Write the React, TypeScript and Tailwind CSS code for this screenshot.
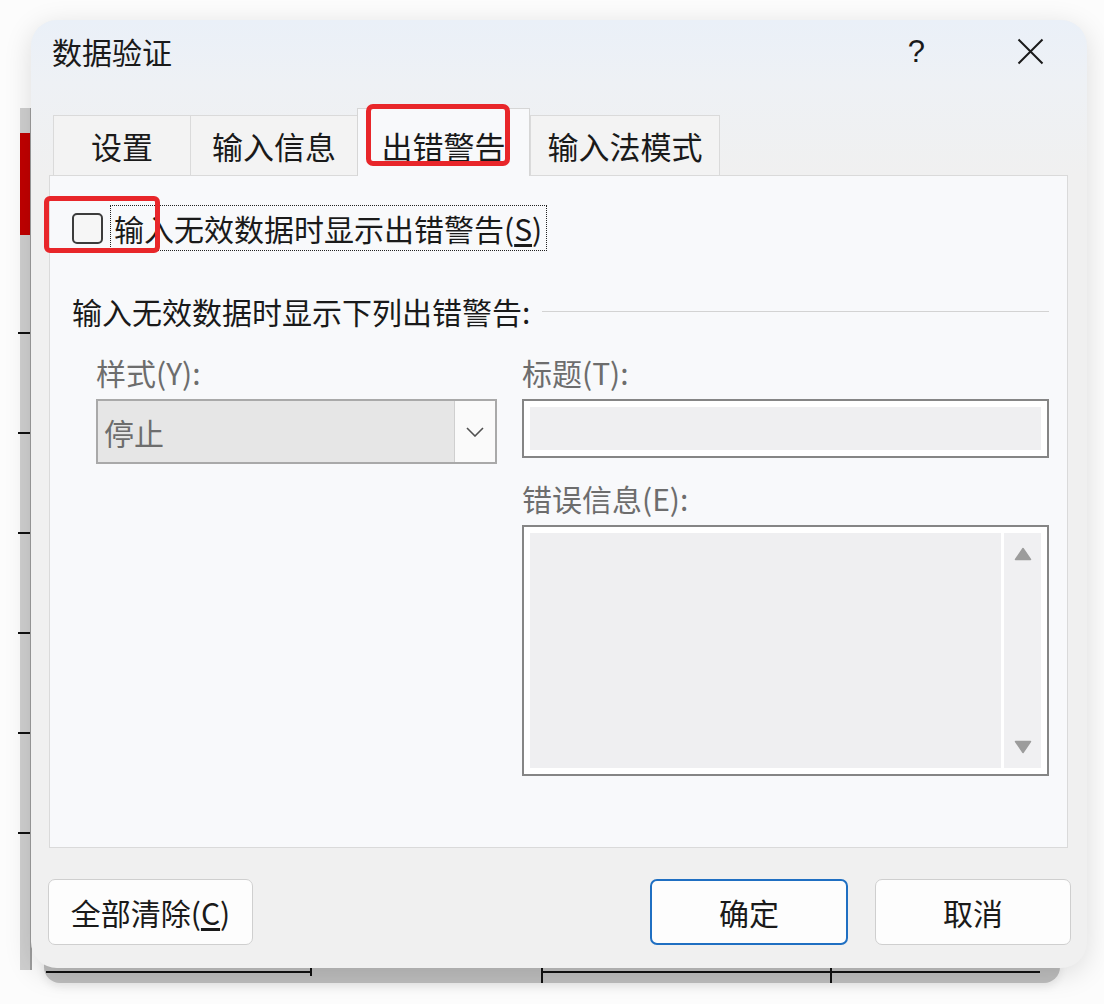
import React from "react";

const F = "font-['Noto_Sans_CJK_SC','Noto_Sans',sans-serif]";

function Tab({ label, w, selected }: { label: string; w: number; selected?: boolean }) {
  if (selected) {
    return (
      <div
        className="relative z-10 -mb-px flex h-[68px] shrink-0 items-end justify-center border border-b-0 border-[#d6d6d6] bg-[#f8f9fb] pb-[15px]"
        style={{ width: w }}
      >
        <span className="text-[31px] leading-[31px] text-[#1a1a1a]">{label}</span>
      </div>
    );
  }
  return (
    <div
      className="flex h-[60px] shrink-0 items-end justify-center border border-b-0 border-r-0 border-[#dadada] bg-[#f3f3f3] pb-[14px] last:border-r"
      style={{ width: w }}
    >
      <span className="text-[31px] leading-[31px] text-[#1a1a1a]">{label}</span>
    </div>
  );
}

export default function App() {
  return (
    <div className={`relative h-[1004px] w-[1104px] overflow-hidden bg-[#fcfcfc] ${F}`}>
      {/* spreadsheet peeking behind the dialog: left edge */}
      <div className="absolute left-[20px] top-[108px] h-[862px] w-[12px] border-r-2 border-[#9d9d9d] bg-[#cfcfcf]">
        <div className="absolute left-0 top-[25px] h-[102px] w-[10px] bg-[#c00000]" />
        <div className="absolute left-[-2px] top-[224px] h-[2px] w-[12px] bg-[#111]" />
        <div className="absolute left-[-2px] top-[324px] h-[2px] w-[12px] bg-[#111]" />
        <div className="absolute left-[-2px] top-[424px] h-[2px] w-[12px] bg-[#111]" />
        <div className="absolute left-[-2px] top-[524px] h-[2px] w-[12px] bg-[#111]" />
        <div className="absolute left-[-2px] top-[624px] h-[2px] w-[12px] bg-[#111]" />
        <div className="absolute left-[-2px] top-[724px] h-[2px] w-[12px] bg-[#111]" />
      </div>
      {/* spreadsheet peeking behind the dialog: bottom edge */}
      <div className="absolute left-[44px] top-[958px] h-[25px] w-[1016px] rounded-b-[16px] bg-[#bdbdbd] shadow-[0_4px_8px_rgba(0,0,0,0.08)]">
        <div className="absolute left-[2px] top-[13px] h-[2px] w-[266px] bg-[#111]" />
        <div className="absolute left-[266px] top-[10px] h-[8px] w-[2px] bg-[#111]" />
        <div className="absolute left-[498px] top-[13px] h-[2px] w-[498px] bg-[#111]" />
        <div className="absolute left-[497px] top-[10px] h-[15px] w-[2px] bg-[#111]" />
        <div className="absolute left-[786px] top-[10px] h-[15px] w-[2px] bg-[#111]" />
      </div>

      {/* dialog window */}
      <div className="absolute left-[31px] top-[20px] flex h-[948px] w-[1056px] flex-col overflow-hidden rounded-[26px] bg-[#f0f0f0] shadow-[0_6px_28px_rgba(0,0,0,0.13)]">
        {/* title bar */}
        <div className="flex h-[62px] shrink-0 items-center bg-linear-to-b from-[#eaf0f8] to-[#eef1f5] pl-[21px]">
          <span className="text-[30px] leading-[30px] text-[#1a1a1a]">数据验证</span>
          <span className="ml-auto mr-[92px] text-[31px] leading-[31px] text-[#1a1a1a] font-['Liberation_Sans',sans-serif]">?</span>
          <svg width="27" height="27" viewBox="0 0 27 27" className="mr-[43px]">
            <path d="M1.5 1.5 L25.5 25.5 M25.5 1.5 L1.5 25.5" stroke="#1a1a1a" strokeWidth="2" fill="none" />
          </svg>
        </div>

        {/* tabs */}
        <div className="flex h-[93px] shrink-0 items-end bg-linear-to-b from-[#eef1f5] to-[#f0f0f0] pl-[22px]">
          <Tab label="设置" w={137} />
          <Tab label="输入信息" w={167} />
          <Tab label="出错警告" w={173} selected />
          <Tab label="输入法模式" w={190} />
        </div>

        {/* panel */}
        <div className="ml-[18px] flex h-[673px] w-[1019px] shrink-0 flex-col border border-[#dadada] bg-[#f8f9fb]">
          {/* checkbox row */}
          <div className="mt-[29px] flex h-[46px] items-center pl-[22px]">
            <div className="h-[31px] w-[31px] rounded-[5px] border-2 border-[#3c3c3c] bg-[#f6f6f6]" />
            <div className="ml-[7px] flex h-[46px] items-center border border-dotted border-[#222] pl-[3px] pr-[4px]">
              <span className="text-[30px] leading-[30px] text-[#1a1a1a]">
                输入无效数据时显示出错警告(<span className="underline underline-offset-[3px]">S</span>)
              </span>
            </div>
          </div>

          {/* group header */}
          <div className="mt-[45px] flex items-center pl-[22px] pr-[18px]">
            <span className="text-[30px] leading-[30px] text-[#1a1a1a]">输入无效数据时显示下列出错警告:</span>
            <div className="ml-[12px] h-px flex-1 bg-[#d3d3d3]" />
          </div>

          {/* fields */}
          <div className="mt-[31px] flex gap-[25px] pl-[46px]">
            {/* left column */}
            <div className="flex w-[401px] flex-col">
              <span className="text-[30px] leading-[30px] text-[#6d6d6d]">样式(Y):</span>
              <div className="mt-[12px] flex h-[65px] border-2 border-[#a9a9a9] bg-[#e6e6e6]">
                <div className="flex flex-1 items-center pl-[6px]">
                  <span className="text-[30px] leading-[30px] text-[#6d6d6d]">停止</span>
                </div>
                <div className="flex w-[41px] items-center justify-center border-l border-[#cfcfcf] bg-[#fafafa]">
                  <svg width="18" height="10" viewBox="0 0 18 10">
                    <path d="M1 1 L9 9 L17 1" stroke="#505050" strokeWidth="1.6" fill="none" />
                  </svg>
                </div>
              </div>
            </div>

            {/* right column */}
            <div className="flex w-[527px] flex-col">
              <span className="text-[30px] leading-[30px] text-[#6d6d6d]">标题(T):</span>
              <div className="mt-[12px] h-[59px] border-2 border-[#858585] bg-white p-[6px]">
                <div className="h-full w-full bg-[#efeff1]" />
              </div>
              <span className="mt-[25px] text-[30px] leading-[30px] text-[#6d6d6d]">错误信息(E):</span>
              <div className="mt-[12px] flex h-[251px] gap-[3px] border-2 border-[#858585] bg-white p-[6px]">
                <div className="h-full flex-1 bg-[#efeff1]" />
                <div className="flex h-full w-[37px] flex-col items-center justify-between bg-[#f0f0f2] py-[14px]">
                  <svg width="18" height="14" viewBox="0 0 18 14">
                    <path d="M9 1.5 L16.5 12.5 L1.5 12.5 Z" fill="#9c9c9c" stroke="#9c9c9c" strokeWidth="1.5" strokeLinejoin="round" />
                  </svg>
                  <svg width="18" height="14" viewBox="0 0 18 14">
                    <path d="M1.5 1.5 L16.5 1.5 L9 12.5 Z" fill="#9c9c9c" stroke="#9c9c9c" strokeWidth="1.5" strokeLinejoin="round" />
                  </svg>
                </div>
              </div>
            </div>
          </div>
        </div>

        {/* buttons */}
        <div className="mt-[31px] flex h-[66px] shrink-0 pl-[17px] pr-[16px]">
          <button className="flex h-[66px] w-[205px] items-center justify-center rounded-[7px] border border-[#cfcfcf] bg-[#fdfdfd]">
            <span className="text-[30px] leading-[30px] text-[#1a1a1a]">
              全部清除(<span className="underline underline-offset-[3px]">C</span>)
            </span>
          </button>
          <button className="ml-auto flex h-[66px] w-[198px] items-center justify-center rounded-[7px] border-2 border-[#1f6fc2] bg-[#fdfdfd]">
            <span className="text-[30px] leading-[30px] text-[#1a1a1a]">确定</span>
          </button>
          <button className="ml-[27px] flex h-[66px] w-[196px] items-center justify-center rounded-[7px] border border-[#cfcfcf] bg-[#fdfdfd]">
            <span className="text-[30px] leading-[30px] text-[#1a1a1a]">取消</span>
          </button>
        </div>
      </div>

      {/* red annotation boxes */}
      <div className="absolute left-[366px] top-[104px] z-20 h-[62px] w-[144px] rounded-[7px] border-[5px] border-[#e8262a]" />
      <div className="absolute left-[44px] top-[196px] z-20 h-[57px] w-[116px] rounded-[6px] border-[5px] border-[#e8262a]" />
    </div>
  );
}
